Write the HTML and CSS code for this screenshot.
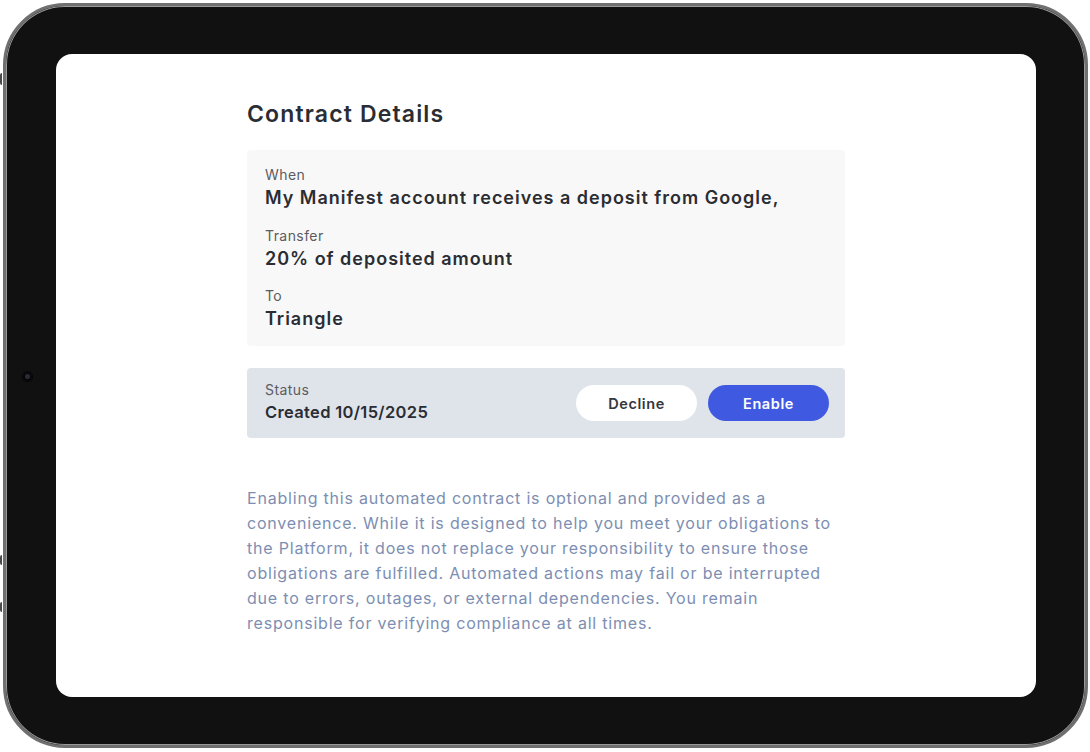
FILE: index.html
```html
<!DOCTYPE html>
<html lang="en">
<head>
    <meta charset="UTF-8">
    <meta name="viewport" content="width=device-width, initial-scale=1.0">
    <title>Contract Details</title>
    <link rel="stylesheet" href="styles.css">
</head>
<body>
    <div class="tablet">
        <span class="side-btn side-btn-top"></span>
        <span class="side-btn side-btn-vol1"></span>
        <span class="side-btn side-btn-vol2"></span>
        <span class="camera"></span>

        <div class="screen">
            <div class="container">
                <h1>Contract Details</h1>

                <div class="details">
                    <div class="field">
                        <span class="label">When</span>
                        <span class="value">My Manifest account receives a deposit from Google,</span>
                    </div>
                    <div class="field">
                        <span class="label">Transfer</span>
                        <span class="value">20% of deposited amount</span>
                    </div>
                    <div class="field">
                        <span class="label">To</span>
                        <span class="value">Triangle</span>
                    </div>
                </div>

                <div class="status">
                    <div class="field">
                        <span class="label">Status</span>
                        <span class="value value-sm">Created 10/15/2025</span>
                    </div>
                    <div class="actions">
                        <button class="btn btn-decline">Decline</button>
                        <button class="btn btn-enable">Enable</button>
                    </div>
                </div>

                <p class="disclaimer">
                    Enabling this automated contract is optional and provided as a convenience. While it is designed to help you meet your obligations to the Platform, it does not replace your responsibility to ensure those obligations are fulfilled. Automated actions may fail or be interrupted due to errors, outages, or external dependencies. You remain responsible for verifying compliance at all times.
                </p>
            </div>
        </div>
    </div>
</body>
</html>
```

FILE: styles.css
```css
* {
    margin: 0;
    padding: 0;
    box-sizing: border-box;
}

body {
    font-family: Inter, "Noto Sans", sans-serif;
    background: #ffffff;
    width: 1090px;
    height: 752px;
    padding: 3px 2px 4px 3px;
}

/* device frame */
.tablet {
    position: relative;
    width: 1085px;
    height: 745px;
    background: #111111;
    border: 3px solid #707070;
    border-radius: 62px;
    box-shadow: inset 0 0 0 1px #9a9a9a;
    padding: 48px 49px 48px 50px;
}

.side-btn {
    position: absolute;
    left: -6px;
    width: 2px;
    background: #4a4a4a;
    border-radius: 2px 0 0 2px;
}

.side-btn-top { top: 67px; height: 12px; }
.side-btn-vol1 { top: 549px; height: 10px; }
.side-btn-vol2 { top: 596px; height: 10px; }

.camera {
    position: absolute;
    left: 17px;
    top: 366px;
    width: 9px;
    height: 9px;
    border-radius: 50%;
    background: #2a2d38;
    box-shadow: 0 0 0 1px #050505, inset 0 0 0 2px #060606;
}

.screen {
    width: 100%;
    height: 100%;
    background: #ffffff;
    border-radius: 16px;
    display: flex;
    justify-content: center;
    padding-top: 44px;
}

.container {
    width: 598px;
}

h1 {
    font-size: 23px;
    font-weight: 600;
    letter-spacing: 0.05em;
    color: #2a2d33;
    line-height: 32px;
    margin-bottom: 20px;
}

.details {
    background: #f8f8f8;
    border-radius: 4px;
    padding: 16px 18px 13px;
    display: flex;
    flex-direction: column;
    gap: 14.5px;
}

.field {
    display: flex;
    flex-direction: column;
}

.label {
    font-size: 14px;
    color: #5c5c60;
    line-height: 18px;
    letter-spacing: 0.03em;
}

.value {
    font-size: 18px;
    font-weight: 600;
    letter-spacing: 0.055em;
    color: #2a2d33;
    line-height: 28px;
}

.value-sm {
    font-size: 16.5px;
    line-height: 26px;
    letter-spacing: 0.02em;
}

.status {
    margin-top: 22px;
    background: #dfe3ea;
    border-radius: 4px;
    padding: 13px 16px 13px 18px;
    display: flex;
    align-items: center;
    justify-content: space-between;
}

.actions {
    display: flex;
    gap: 11px;
}

.btn {
    width: 121px;
    height: 36px;
    border: none;
    border-radius: 18px;
    font-family: inherit;
    font-size: 14.5px;
    font-weight: 600;
    letter-spacing: 0.04em;
    cursor: pointer;
}

.btn-decline {
    background: #ffffff;
    color: #35373d;
}

.btn-enable {
    background: #3f5ae0;
    color: #ffffff;
}

.disclaimer {
    margin-top: 48px;
    font-size: 16px;
    line-height: 25px;
    letter-spacing: 0.05em;
    color: #7d8eb2;
}
```
